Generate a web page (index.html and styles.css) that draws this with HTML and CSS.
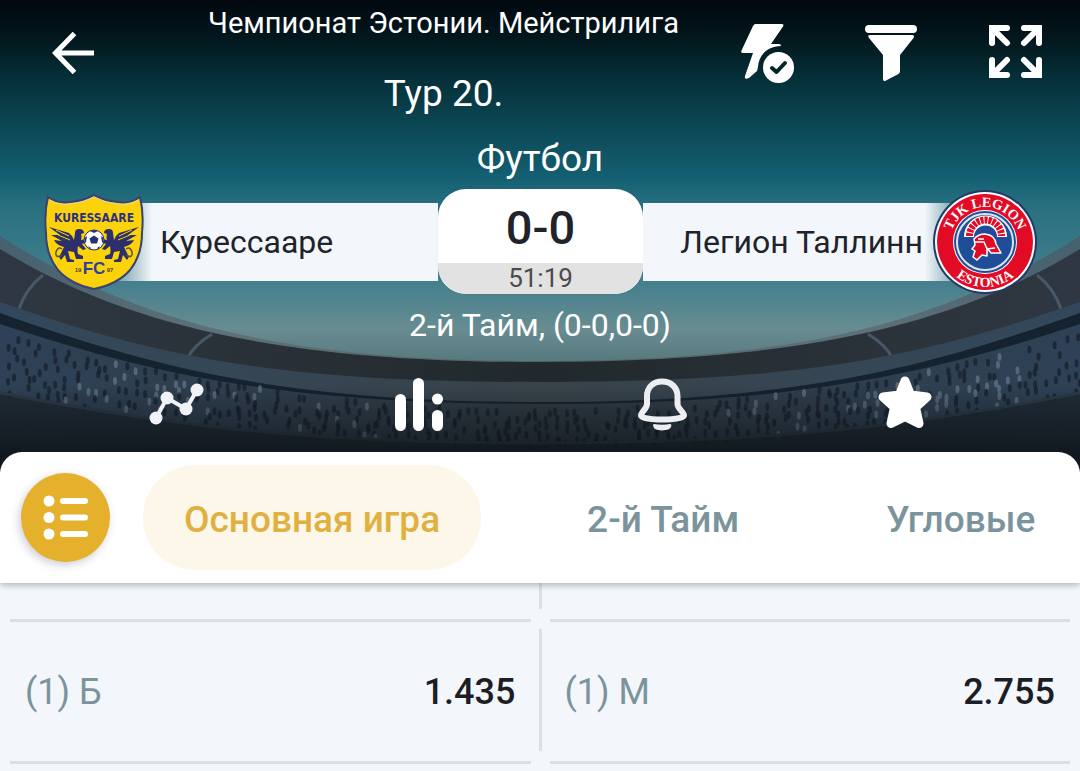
FILE: index.html
```html
<!DOCTYPE html>
<html lang="ru">
  <head>
    <meta charset="UTF-8" />
    <meta name="viewport" content="width=device-width, initial-scale=1.0" />
    <title>Курессааре - Легион Таллинн</title>
    <link rel="stylesheet" href="styles.css">
  </head>
  <body>
    <header class="hero">
      <svg class="stadium" viewBox="0 0 1080 472" preserveAspectRatio="none" aria-hidden="true">
        <defs>
          <linearGradient id="sky" x1="0" y1="0" x2="0" y2="365" gradientUnits="userSpaceOnUse">
            <stop offset="0" stop-color="#01070e" />
            <stop offset="0.12" stop-color="#031a20" />
            <stop offset="0.22" stop-color="#05313a" />
            <stop offset="0.35" stop-color="#0c4855" />
            <stop offset="0.49" stop-color="#146073" />
            <stop offset="0.56" stop-color="#28707f" />
            <stop offset="0.78" stop-color="#46808e" />
            <stop offset="0.9" stop-color="#678c91" />
            <stop offset="1" stop-color="#56787d" />
          </linearGradient>
          <linearGradient id="rim" x1="0" y1="0" x2="1080" y2="0" gradientUnits="userSpaceOnUse">
            <stop offset="0" stop-color="#46606e" />
            <stop offset="0.2" stop-color="#5f7178" />
            <stop offset="0.5" stop-color="#526468" />
            <stop offset="0.8" stop-color="#5f7178" />
            <stop offset="1" stop-color="#46606e" />
          </linearGradient>
          <linearGradient id="roof" x1="0" y1="0" x2="1080" y2="0" gradientUnits="userSpaceOnUse">
            <stop offset="0" stop-color="#2f3742" />
            <stop offset="0.5" stop-color="#22292c" />
            <stop offset="1" stop-color="#2f3742" />
          </linearGradient>
          <linearGradient id="ledge" x1="0" y1="0" x2="1080" y2="0" gradientUnits="userSpaceOnUse">
            <stop offset="0" stop-color="#33485c" />
            <stop offset="0.5" stop-color="#38434a" />
            <stop offset="1" stop-color="#33485c" />
          </linearGradient>
          <linearGradient id="stands" x1="0" y1="0" x2="1080" y2="0" gradientUnits="userSpaceOnUse">
            <stop offset="0" stop-color="#2e4156" />
            <stop offset="0.5" stop-color="#303b42" />
            <stop offset="1" stop-color="#2e4156" />
          </linearGradient>
          <linearGradient id="fade" x1="0" y1="385" x2="0" y2="470" gradientUnits="userSpaceOnUse">
            <stop offset="0" stop-color="#0a0e13" stop-opacity="0" />
            <stop offset="1" stop-color="#0a0e13" stop-opacity="0.8" />
          </linearGradient>
        </defs>
        <rect width="1080" height="472" fill="url(#sky)" />
        <path d="M0 236C130 318 270 361 540 361S950 318 1080 236V472H0Z" fill="url(#rim)" />
        <path d="M0 249C120 322 270 362 540 362S960 322 1080 249V472H0Z" fill="url(#roof)" />
        <g fill="none" stroke="#46586a" stroke-width="3">
          <path d="M43 275Q26 288 19 309M212 334Q194 345 187 359" />
          <path d="M1037 275Q1054 288 1061 309M868 334Q886 345 893 359" />
        </g>
        <path d="M0 302C160 358 280 382 540 382S920 358 1080 302V472H0Z" fill="url(#ledge)" />
        <path d="M0 313C160 370 290 402 540 402S920 370 1080 313V472H0Z" fill="#15222f" />
        <path d="M0 324C160 377 290 404 540 404S920 377 1080 324V472H0Z" fill="url(#stands)" />
        <g id="crowd"></g>
        <path d="M0 393C160 424 300 443 540 443S920 424 1080 393V472H0Z" fill="#1b232b" fill-opacity="0.7" />
        <path d="M0 393C160 424 300 443 540 443S920 424 1080 393" fill="none" stroke="#2d3a46" stroke-width="3" />
        <rect y="250" width="1080" height="222" fill="url(#fade)" />
      </svg>

      <div class="topbar">
        <button class="icon-btn back" type="button" aria-label="Назад">
          <svg width="42" height="42" viewBox="0 0 42 42" fill="none" stroke="#fff" stroke-width="5">
            <path d="M42 21H4M22.500 1.500L3.500 21L22.500 40.500" />
          </svg>
        </button>
        <div class="titles">
          <h1>Чемпионат Эстонии. Мейстрилига</h1>
          <p class="round">Тур 20.</p>
        </div>
        <div class="actions">
          <button class="icon-btn" type="button" aria-label="Быстрая ставка">
            <svg width="54" height="60" viewBox="0 0 54 60">
              <path d="M14.500 0H40.500Q43.500 0 42 2.500L30 20H38Q40 20 40 22C27 22 17.500 31 17 43L16 47L8 54Q3 56 4 52L12 29H2Q-0.500 29 0.500 26.500L12 2Q13 0 14.500 0Z" fill="#fff" />
              <circle cx="37.500" cy="43.500" r="15.500" fill="#fff" />
              <path d="M31 44L35.500 48L44 39" fill="none" stroke="#04242c" stroke-width="4" stroke-linecap="round" stroke-linejoin="round" />
            </svg>
          </button>
          <button class="icon-btn" type="button" aria-label="Фильтр">
            <svg width="54" height="60" viewBox="0 0 54 60" fill="#fff">
              <rect y="1" width="52" height="8" rx="4" />
              <path d="M5 11H47Q50 11 48.500 14L35 31V47Q35 49 33.500 50L21 56.500Q18 58 18 55V31L4 14Q2 11 5 11Z" />
            </svg>
          </button>
          <button class="icon-btn" type="button" aria-label="На весь экран">
            <svg width="54" height="60" viewBox="0 0 54 60" fill="none" stroke="#fff" stroke-width="6" stroke-linecap="round">
              <path d="M18 4H3V19M4 5L18 19" />
              <path d="M35 4H50V19M49 5L35 19" />
              <path d="M18 51H3V36M4 50L18 36" />
              <path d="M35 51H50V36M49 50L35 36" />
            </svg>
          </button>
        </div>
      </div>

      <p class="sport">Футбол</p>

      <div class="scoreboard">
        <div class="team home">
          <svg class="crest" width="100" height="98" viewBox="0 0 100 98" role="img" aria-label="Kuressaare FC">
            <path d="M4 4Q14 11 26 9Q39 8 50 2Q61 8 74 9Q86 11 96 4Q100 20 98 40Q98 62 86 77Q74 91 50 96Q26 91 14 77Q2 62 2 40Q0 20 4 4Z" fill="#fcd20b" stroke="#3b4170" stroke-width="2" />
            <path d="M5.500 7Q15 13 27 11Q39 10 50 4Q61 10 73 11Q85 13 94.500 7" fill="none" stroke="#d9d6b8" stroke-width="1" />
            <text class="crest-name" x="50" y="29" text-anchor="middle">KURESSAARE</text>
            <g id="griffin" fill="#2b2f6b">
              <path d="M5 34L25 40Q29 43 30 47L31 40Q31 36 35 36Q40 36 40 40L37 41Q38 44 37 47L42 46L44 49L38 51L42 56L39 57L34 53Q33 58 34 61L39 63V66L32 66L30 59L24 58L26 66L30 67V69L23 69L21 62L17 67L15 64L20 54Q12 52 10 47L18 48L7 42L16 42L5 34Z" />
              <path d="M18 62Q11 66 12 59Q14 53 18 56" fill="none" stroke="#5a5338" stroke-width="1.500" />
              <path d="M12 37L25 43M14 42L26 47" stroke="#fcd20b" stroke-width="1" />
            </g>
            <use href="#griffin" transform="translate(100 0) scale(-1 1)" />
            <circle cx="50" cy="47" r="10" fill="#fff" stroke="#2b2f6b" stroke-width="1" />
            <path d="M50 42.500L54.500 45.500L53 50.500H47L45.500 45.500ZM46 38L50 40L54 38L50 37ZM40.500 45L43 43L42 49L41 50ZM59.500 45L57 43L58 49L59 50ZM44 53L47 55L46 56.500ZM56 53L53 55L54 56.500Z" fill="#24336f" />
            <text class="crest-fc" x="50" y="81" text-anchor="middle">FC</text>
            <text class="crest-year" x="34" y="79" text-anchor="middle">19</text>
            <text class="crest-year" x="66" y="79" text-anchor="middle">97</text>
          </svg>
          <span class="team-name">Курессааре</span>
        </div>

        <div class="score">
          <strong class="goals">0-0</strong>
          <span class="clock">51:19</span>
        </div>

        <div class="team away">
          <span class="team-name">Легион Таллинн</span>
          <svg class="crest" width="104" height="104" viewBox="0 0 104 104" role="img" aria-label="TJK Legion Estonia">
            <defs>
              <path id="arc-top" d="M17 52A35 35 0 0 1 87 52" />
              <path id="arc-bottom" d="M7 52A45 45 0 0 0 97 52" />
            </defs>
            <circle cx="52" cy="52" r="52" fill="#203a66" />
            <circle cx="52" cy="52" r="50" fill="#fff" />
            <circle cx="52" cy="52" r="48" fill="#e20b26" />
            <circle cx="52" cy="52" r="32" fill="#fff" />
            <circle cx="52" cy="52" r="31" fill="#1f4d98" />
            <circle cx="52" cy="52" r="28" fill="none" stroke="#dce6f2" stroke-width="2" />
            <text class="legion-text"><textPath href="#arc-top" startOffset="50%" text-anchor="middle">TJK LEGION</textPath></text>
            <text class="legion-text"><textPath href="#arc-bottom" startOffset="50%" text-anchor="middle">ESTONIA</textPath></text>
            <path d="M36 47A16.500 16.500 0 0 1 69 47" fill="none" stroke="#fff" stroke-width="10" />
            <path d="M36.500 46A16 16 0 0 1 68.500 46" fill="none" stroke="#e20b26" stroke-width="7" stroke-dasharray="3 1" />
            <path d="M41 49Q45 44 52 44Q62 45 63 54L68 63L58 63L54 58L54 66L49 65L44 70L40 67L42 61L39 59L42 55Z" fill="#e20b26" stroke="#fff" stroke-width="1.500" stroke-linejoin="round" />
            <path d="M42 52H51L54 59L62 58M45 49H51" fill="none" stroke="#fff" stroke-width="1.500" />
          </svg>
        </div>
      </div>

      <p class="period">2-й Тайм, (0-0,0-0)</p>

      <div class="tools">
        <button class="icon-btn" type="button" aria-label="Динамика">
          <svg width="56" height="56" viewBox="0 0 56 56" fill="#f1f2f7">
            <path d="M8 42L19 22L38 33L49 14" fill="none" stroke="#f1f2f7" stroke-width="4" />
            <circle cx="8" cy="42" r="6.500" />
            <circle cx="19" cy="22" r="6.500" />
            <circle cx="38" cy="33" r="6.500" />
            <circle cx="49" cy="14" r="6.500" />
          </svg>
        </button>
        <button class="icon-btn" type="button" aria-label="Статистика">
          <svg width="56" height="56" viewBox="0 0 56 56" fill="#fff">
            <rect x="4" y="18" width="11" height="37" rx="5.500" />
            <rect x="22" y="2" width="11" height="53" rx="5.500" />
            <circle cx="46.500" cy="23" r="5.500" />
            <rect x="41" y="34" width="11" height="21" rx="5.500" />
          </svg>
        </button>
        <button class="icon-btn" type="button" aria-label="Уведомления">
          <svg width="56" height="56" viewBox="0 0 56 56">
            <path d="M28 5.500C18.500 5.500 13 12 13 20V28C13 33 7 36 7 39.500C7 41 12 43.500 28 43.500S50 41 50 39.500C50 36 43.500 33 43.500 28V20C43.500 12 37.500 5.500 28 5.500Z" fill="none" stroke="#eceef2" stroke-width="6" stroke-linejoin="round" />
            <path d="M20 48Q28 49.500 36 48Q38 48 37 51Q36 54 28 54.500Q20 54 19.500 51Q18.500 48 20 48Z" fill="#eceef2" />
          </svg>
        </button>
        <button class="icon-btn" type="button" aria-label="В избранное">
          <svg width="56" height="56" viewBox="0 0 56 56">
            <path d="M28 5L33.500 19L50 21L38.500 31.500L42 47.500L28 40.500L14 47.500L17.500 31.500L6 21L22.500 19Z" fill="#fff" stroke="#fff" stroke-width="9" stroke-linejoin="round" />
          </svg>
        </button>
      </div>
    </header>

    <nav class="tabs">
      <button class="menu-btn" type="button" aria-label="Все рынки">
        <svg width="89" height="89" viewBox="0 0 89 89" fill="#fff">
          <circle cx="28" cy="28" r="5.500" />
          <circle cx="28" cy="44.500" r="5.500" />
          <circle cx="28" cy="61" r="5.500" />
          <rect x="39" y="25" width="28" height="6" rx="3" />
          <rect x="39" y="41.500" width="28" height="6" rx="3" />
          <rect x="39" y="58" width="28" height="6" rx="3" />
        </svg>
      </button>
      <div class="tab-list">
        <button class="tab active" type="button">Основная игра</button>
        <button class="tab" type="button">2-й Тайм</button>
        <button class="tab" type="button">Угловые</button>
      </div>
    </nav>

    <main class="markets">
      <div class="row row-cut">
        <div class="cell"></div>
        <span class="divider"></span>
        <div class="cell"></div>
      </div>
      <div class="row">
        <button class="cell" type="button">
          <span class="label">(1) Б</span>
          <span class="odds">1.435</span>
        </button>
        <span class="divider"></span>
        <button class="cell" type="button">
          <span class="label">(1) М</span>
          <span class="odds">2.755</span>
        </button>
      </div>
    </main>

    <script src="crowd.js"></script>
  </body>
</html>
```
FILE: styles.css
```css
body,
h1,
p {
  margin: 0;
  padding: 0;
}

body {
  font-family: Roboto, "Noto Sans", sans-serif;
  background-color: #f3f6fa;
  min-height: 100vh;
}

button {
  font-family: inherit;
  border: none;
  background: none;
  padding: 0;
  margin: 0;
  cursor: pointer;
}

svg {
  display: block;
}

/* Match header */
.hero {
  position: relative;
  isolation: isolate;
  padding-bottom: 40px;
  color: #fff;
  text-align: center;
  background-color: #0a0e13;
}

.stadium {
  position: absolute;
  top: 0;
  left: 0;
  width: 100%;
  height: 100%;
  z-index: -1;
}

.topbar {
  display: flex;
  align-items: flex-start;
}

.back {
  padding: 32px 52px;
}

.titles {
  flex: 1;
}

h1 {
  font-size: 29px;
  line-height: 46px;
  font-weight: 400;
  white-space: nowrap;
}

.round {
  margin-top: 22px;
  font-size: 37px;
  line-height: 52px;
}

.actions {
  display: flex;
  gap: 70px;
  padding: 24px 37px 0 0;
}

.sport {
  margin-top: 13px;
  font-size: 37px;
  line-height: 52px;
}

/* Score and teams */
.scoreboard {
  display: flex;
  align-items: center;
  padding: 0 43px 0 44px;
  margin-top: 4px;
}

.team {
  display: flex;
  align-items: center;
  flex: 1;
  min-width: 0;
}

.crest {
  position: relative;
  z-index: 1;
  flex-shrink: 0;
}

.team-name {
  flex: 1;
  font-size: 32px;
  line-height: 78px;
  color: #20232a;
  white-space: nowrap;
}

.home .team-name {
  margin-left: -48px;
  padding-left: 64px;
  text-align: left;
  background: linear-gradient(to right, rgba(243, 246, 250, 0) 8px, #f3f6fa 56px);
}

.away .team-name {
  margin-right: -48px;
  padding-right: 58px;
  text-align: right;
  background: linear-gradient(to left, rgba(243, 246, 250, 0) 8px, #f3f6fa 56px);
}

.score {
  width: 205px;
  border-radius: 28px;
  overflow: hidden;
  background-color: #fff;
  box-shadow: 0 0 3px rgba(0, 0, 0, 0.06);
}

.goals {
  display: block;
  font-size: 47px;
  line-height: 70px;
  font-weight: 500;
  padding-top: 4px;
  color: #20232a;
}

.clock {
  display: block;
  font-size: 26px;
  line-height: 31px;
  background-color: #e2e2e2;
  color: #4c4c4c;
}

.period {
  margin-top: 11px;
  font-size: 32px;
  line-height: 40px;
}

.tools {
  display: grid;
  grid-template-columns: repeat(4, 1fr);
  justify-items: center;
  padding: 0 54px;
  margin-top: 31px;
}

/* Crest lettering */
.crest-name {
  font: bold 12px "DejaVu Sans Condensed", "DejaVu Sans", sans-serif;
  fill: #2b3180;
}

.crest-fc {
  font: bold 17px "Liberation Sans", sans-serif;
  fill: #2b3fa0;
}

.crest-year {
  font: bold 6px "Liberation Sans", sans-serif;
  fill: #4a4420;
}

.legion-text {
  font: bold 14px "Liberation Serif", serif;
  fill: #fff;
}

/* Market tabs */
.tabs {
  position: relative;
  z-index: 1;
  display: flex;
  align-items: center;
  gap: 33px;
  margin-top: -20px;
  padding: 13px 0 13px 21px;
  background-color: #fff;
  border-radius: 22px 22px 0 0;
  box-shadow: 0 2px 6px rgba(60, 50, 70, 0.35);
}

.menu-btn {
  flex-shrink: 0;
  border-radius: 50%;
  background-color: #e5b02c;
  box-shadow: -2px 3px 8px rgba(60, 50, 90, 0.25);
}

.tab-list {
  display: flex;
  gap: 65px;
  flex: 1;
  overflow: hidden;
}

.tab {
  flex-shrink: 0;
  padding: 4px 41px 0;
  border-radius: 52px;
  font-size: 37px;
  line-height: 101px;
  font-weight: 500;
  color: #7b949c;
}

.tab.active {
  background-color: #fcf7e9;
  color: #e0b040;
}

/* Odds */
.row {
  display: grid;
  grid-template-columns: 1fr 3px 1fr;
  gap: 8px;
  height: 142px;
  padding: 0 10px;
}

.row-cut {
  height: 39px;
}

.cell {
  display: flex;
  align-items: center;
  justify-content: space-between;
  padding: 0 15px;
  border-bottom: 3px solid #dce0e4;
  font-size: 36px;
}

.label {
  color: #7b949c;
}

.odds {
  font-weight: 500;
  color: #1b1e24;
}

.divider {
  margin: 7px 0 13px;
  background-color: #dce0e4;
}

.row-cut .divider {
  margin-top: 0;
}
```
FILE: crowd.js
```js
// Fills the stands with spectators, row by row along the curve of the bowl
const crowd = document.getElementById("crowd");
let seed = 7;

function random() {
  seed = (seed * 16807) % 2147483647;
  return seed / 2147483647;
}

let people = "";
for (let row = 0; row < 7; row++) {
  for (let x = 4; x < 1080; x += 10) {
    if (random() < 0.35) continue;
    const edge = Math.pow(Math.abs(x - 540) / 540, 1.9);
    const y = 411 - 76 * edge + row * (5 + 4 * edge) + random() * 5;
    const light = random() < 0.1 + 0.3 * edge && edge > 0.1 && edge < 0.8;
    const fill = light ? "#667786" : "#151e29";
    people += `<ellipse cx="${x + random() * 6}" cy="${y}" rx="2" ry="4" fill="${fill}" opacity="0.7" />`;
  }
}
crowd.innerHTML = people;
```
